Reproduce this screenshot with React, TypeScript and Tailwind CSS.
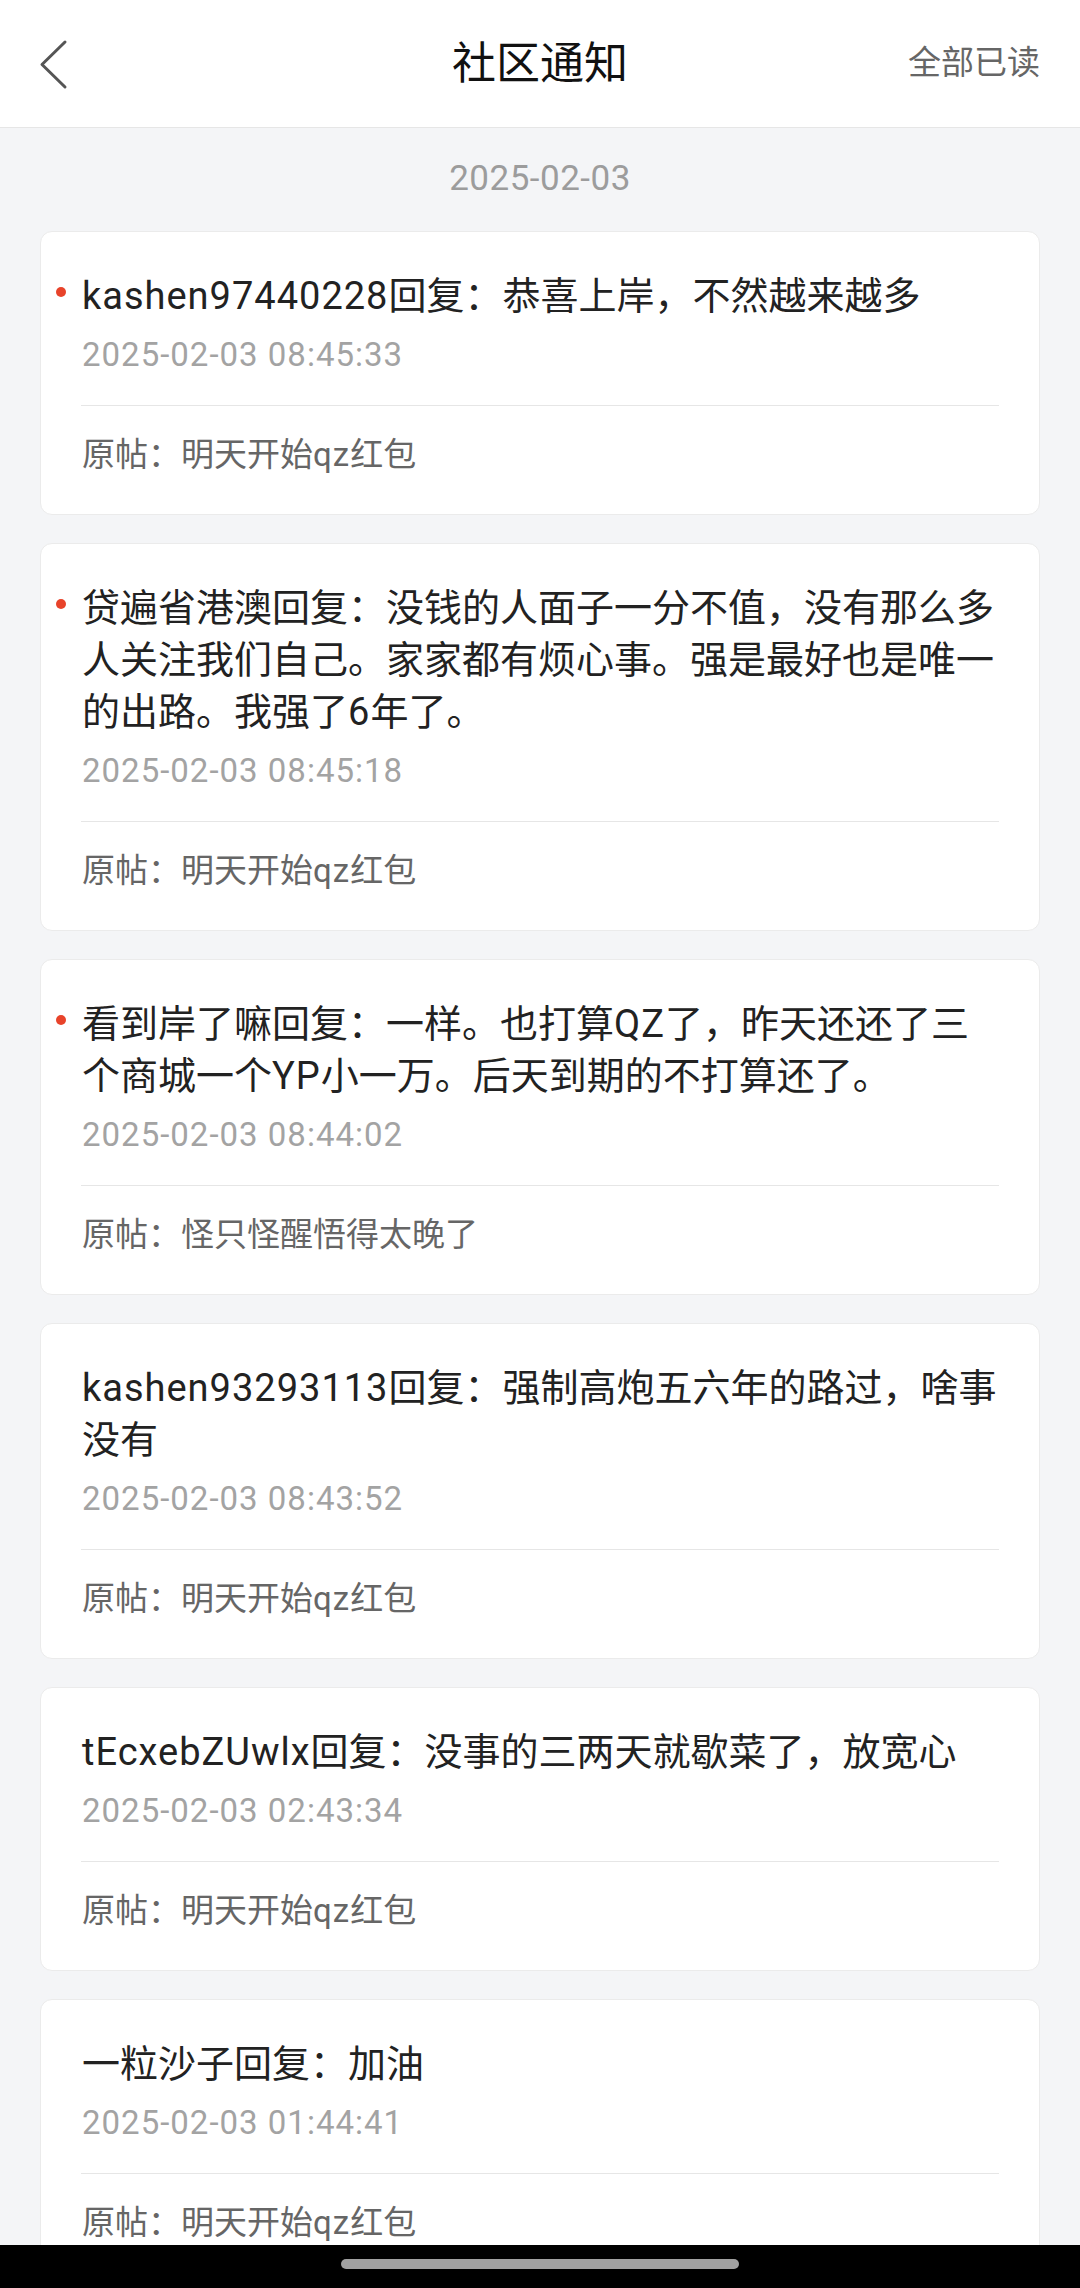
import React from "react";

type Item = {
  unread: boolean;
  text: string;
  time: string;
  post: string;
};

const items: Item[] = [
  { unread: true, text: "kashen97440228回复：恭喜上岸，不然越来越多", time: "2025-02-03 08:45:33", post: "原帖：明天开始qz红包" },
  { unread: true, text: "贷遍省港澳回复：没钱的人面子一分不值，没有那么多人关注我们自己。家家都有烦心事。强是最好也是唯一的出路。我强了6年了。", time: "2025-02-03 08:45:18", post: "原帖：明天开始qz红包" },
  { unread: true, text: "看到岸了嘛回复：一样。也打算QZ了，昨天还还了三个商城一个YP小一万。后天到期的不打算还了。", time: "2025-02-03 08:44:02", post: "原帖：怪只怪醒悟得太晚了" },
  { unread: false, text: "kashen93293113回复：强制高炮五六年的路过，啥事没有", time: "2025-02-03 08:43:52", post: "原帖：明天开始qz红包" },
  { unread: false, text: "tEcxebZUwlx回复：没事的三两天就歇菜了，放宽心", time: "2025-02-03 02:43:34", post: "原帖：明天开始qz红包" },
  { unread: false, text: "一粒沙子回复：加油", time: "2025-02-03 01:44:41", post: "原帖：明天开始qz红包" },
];

const FONT = { fontFamily: 'Roboto, "Noto Sans CJK SC", "Noto Sans", sans-serif' };

function Mixed({ text }: { text: string }) {
  const parts = text.split(/([A-Za-z0-9]+)/);
  return (
    <>
      {parts.map((p, i) =>
        /^[A-Za-z0-9]+$/.test(p) ? (
          <span key={i} className="tracking-[1px]">
            {p}
          </span>
        ) : (
          <React.Fragment key={i}>{p}</React.Fragment>
        )
      )}
    </>
  );
}

function Card({ item }: { item: Item }) {
  return (
    <div className="relative shrink-0 rounded-[12px] border border-[#ebebeb] bg-white px-[40px] pt-[38px] pb-[37px]">
      {item.unread && (
        <span className="absolute left-[15px] top-[55px] h-[10px] w-[10px] rounded-full bg-[#e8432a]" />
      )}
      <div className="pl-[1px] text-[38px] leading-[52px] text-[#222222]">
        <Mixed text={item.text} />
      </div>
      <div className="mt-[11px] pl-[1px] text-[33px] leading-[44px] tracking-[1px] text-[#a3a3a3]">{item.time}</div>
      <div className="mt-[28px] h-px bg-[#e6e6e6]" />
      <div className="mt-[27px] pl-[1px] text-[33px] leading-[44px] text-[#666666]">
        <Mixed text={item.post} />
      </div>
    </div>
  );
}

export default function App() {
  return (
    <div className="flex h-[2288px] w-[1080px] flex-col overflow-hidden bg-[#f4f5f7]" style={FONT}>
      <header className="relative flex h-[128px] shrink-0 items-center justify-center border-b border-[#e6e6e6] bg-white">
        <svg className="absolute left-[30px] top-[34px]" width="48" height="60" viewBox="30 34 48 60" fill="none">
          <path d="M65 42 L42 64.5 L65 87" stroke="#555555" strokeWidth="3" strokeLinecap="round" strokeLinejoin="round" />
        </svg>
        <div className="text-[44px] leading-[56px] font-normal text-[#111111]">社区通知</div>
        <div className="absolute right-[40px] top-[41px] text-[33px] leading-[44px] text-[#666666]">全部已读</div>
      </header>
      <main className="flex flex-1 flex-col gap-[28px] overflow-hidden px-[40px] pt-[27px]">
        <div className="shrink-0 text-center text-[35px] leading-[48px] tracking-[0.5px] text-[#9c9c9c]">2025-02-03</div>
        {items.map((it, i) => (
          <Card key={i} item={it} />
        ))}
      </main>
      <div className="flex h-[43px] shrink-0 justify-center bg-black pt-[14px]">
        <div className="h-[10px] w-[398px] rounded-full bg-[#a0a0a0]" />
      </div>
    </div>
  );
}
